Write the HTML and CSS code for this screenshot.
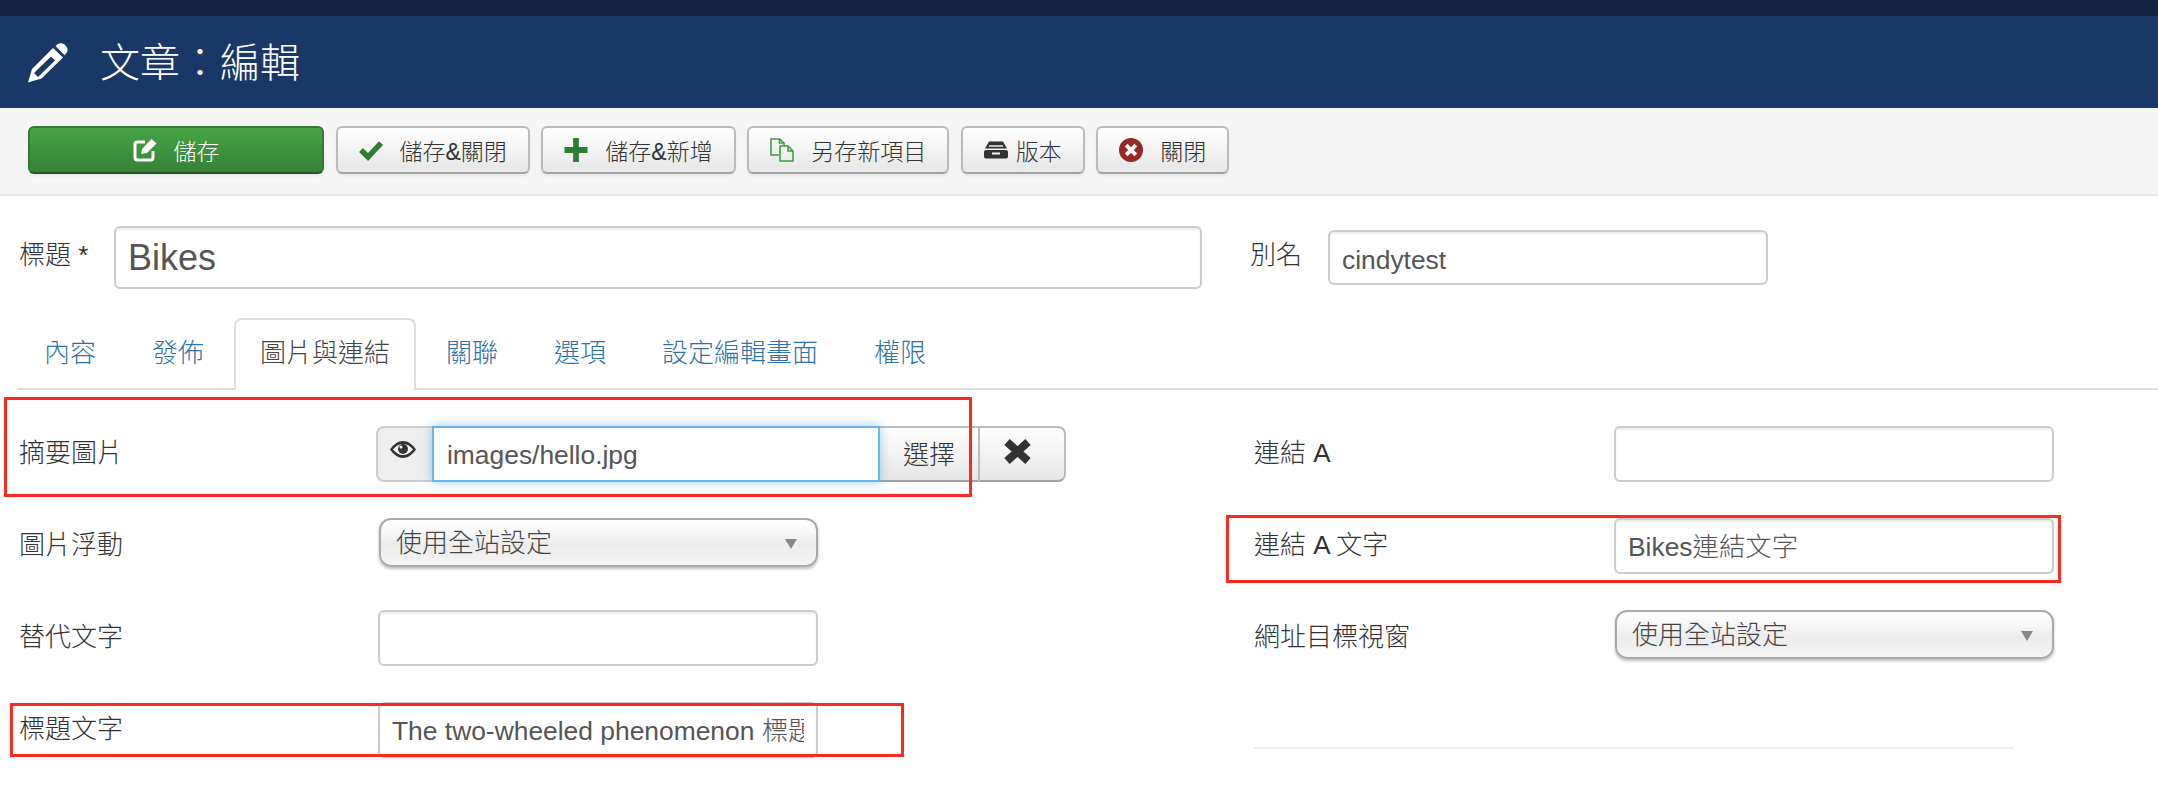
FILE: index.html
```html
<!DOCTYPE html>
<html lang="zh-Hant">
<head>
<meta charset="utf-8">
<title>文章：編輯</title>
<link rel="stylesheet" href="styles.css">
</head>
<body>
<div class="topbar"></div>
<header class="header">
  <svg class="ico-pencil" viewBox="0 0 40 40"><path d="M0 39.500L4 26 25 5l10 9.500L13.500 35.500zM6 30l4 4 17-16.500-4-4z" fill-rule="evenodd" fill="#fff"/><path d="M27.500 3l2-1.800Q33 -1 36.500 1.500l1.500 1.500q3 3.500 .5 7l-2 2.200z" fill="#fff"/></svg>
  <h1 class="page-title">文章：編輯</h1>
</header>
<nav class="toolbar">
  <button class="btn btn-save">
    <svg class="ico" viewBox="0 0 24 24"><path d="M12 4H4.500A2.500 2.500 0 0 0 2 6.500v13A2.500 2.500 0 0 0 4.500 22h13a2.500 2.500 0 0 0 2.500-2.500V13" fill="none" stroke="#fff" stroke-width="3"/><path d="M8 16l1-5L18.500 1l5 4.500L14 15z" fill="#fff"/></svg>
    儲存
  </button>
  <button class="btn">
    <svg class="ico" viewBox="0 0 24 20"><path d="M2 10l7 7L22 3" fill="none" stroke="#2f7d32" stroke-width="5.500"/></svg>
    儲存&amp;關閉
  </button>
  <button class="btn">
    <svg class="ico" viewBox="0 0 24 25"><path d="M9 0h6v9.500h9v6h-9V25H9v-9.500H0v-6h9z" fill="#2f7d32"/></svg>
    儲存&amp;新增
  </button>
  <button class="btn">
    <svg class="ico" viewBox="0 0 24 24"><path d="M9 17H1V1h8.500L14 5v3M9.500 1v4H14M10 8h8l5 5v10H10zM18 8v5h5" fill="none" stroke="#3d9a3d" stroke-width="1.500"/></svg>
    另存新項目
  </button>
  <button class="btn btn-tight">
    <svg class="ico" viewBox="0 0 24 17"><path d="M5 0h14l4 7H1z" fill="#333"/><path d="M5 4.500h14" stroke="#eee" stroke-width="1.500"/><path d="M2 8.500h20a2 2 0 0 1 2 2V15a2 2 0 0 1-2 2H2a2 2 0 0 1-2-2v-4.500a2 2 0 0 1 2-2zM8 11v2h8v-2z" fill="#333" fill-rule="evenodd"/></svg>
    版本
  </button>
  <button class="btn">
    <svg class="ico" viewBox="0 0 25 25"><circle cx="12.500" cy="12.500" r="12.500" fill="#942a25"/><path d="M7.500 7.500l10 10M17.500 7.500l-10 10" stroke="#fff" stroke-width="4"/></svg>
    關閉
  </button>
</nav>
<main class="main">
  <div class="title-row">
    <label class="title-label">標題 *</label>
    <input class="input input-title" value="Bikes">
    <label class="alias-label">別名</label>
    <input class="input input-alias" value="cindytest">
  </div>
  <ul class="tabs">
    <li class="tab">內容</li>
    <li class="tab">發佈</li>
    <li class="tab tab-active">圖片與連結</li>
    <li class="tab">關聯</li>
    <li class="tab">選項</li>
    <li class="tab">設定編輯畫面</li>
    <li class="tab">權限</li>
  </ul>
  <div class="columns">
    <section class="col col-left">
      <div class="row">
        <label class="label label-append">摘要圖片</label>
        <div class="append">
          <span class="addon">
            <svg class="ico-eye" viewBox="0 0 26 17"><path d="M0 8.500C4 3 8 0 13 0s9 3 13 8.500C22 14 18 17 13 17S4 14 0 8.500z" fill="#333"/><path d="M3 8.500C6 5 9 3 13 3s7 2 10 5.500C20 12 17 14 13 14S6 12 3 8.500z" fill="#fff"/><circle cx="13" cy="8" r="5" fill="#333"/><circle cx="11" cy="6" r="1.500" fill="#fff"/></svg>
          </span>
          <input class="input-focus" value="images/hello.jpg">
          <button class="append-btn append-select">選擇</button>
          <button class="append-btn append-clear">
            <svg class="ico-x" viewBox="0 0 27 25"><path d="M3 3l21 19M24 3L3 22" stroke="#333" stroke-width="8"/></svg>
          </button>
        </div>
      </div>
      <div class="row">
        <label class="label">圖片浮動</label>
        <div class="select"><select><option>使用全站設定</option></select></div>
      </div>
      <div class="row">
        <label class="label">替代文字</label>
        <input class="input input-field" value="">
      </div>
      <div class="row">
        <label class="label">標題文字</label>
        <input class="input input-field" value="The two-wheeled phenomenon 標題文字">
      </div>
    </section>
    <section class="col col-right">
      <div class="row">
        <label class="label">連結 A</label>
        <input class="input input-field" value="">
      </div>
      <div class="row">
        <label class="label">連結 A 文字</label>
        <input class="input input-field" value="Bikes連結文字">
      </div>
      <div class="row">
        <label class="label">網址目標視窗</label>
        <div class="select"><select><option>使用全站設定</option></select></div>
      </div>
      <hr class="rule">
    </section>
  </div>
  <div class="mark mark-image"></div>
  <div class="mark mark-caption"></div>
  <div class="mark mark-linktext"></div>
</main>
</body>
</html>
```

FILE: styles.css
```css
* { box-sizing: border-box; }
html, body { margin: 0; padding: 0; height: 794px; overflow: hidden; background: #fff; }
body {
  font-family: "Liberation Sans", "Noto Sans CJK TC", sans-serif;
  font-size: 26px;
  font-weight: 300;
  color: #333;
}
.topbar { height: 16px; background: #14233f; }
.header {
  height: 92px;
  background: #1a3867;
  display: flex;
  align-items: center;
  padding-left: 28px;
}
.ico-pencil { width: 40px; height: 40px; flex: none; margin-top: 1px; }
.page-title {
  margin: 2px 0 0 32px;
  font-size: 40px;
  font-weight: 300;
  color: #fff;
  line-height: 1;
}
.toolbar {
  height: 88px;
  background: #f5f5f5;
  border-bottom: 2px solid #e6e6e6;
  display: flex;
  align-items: flex-start;
  gap: 11.500px;
  padding: 18px 0 0 28px;
}
.btn {
  height: 48px;
  padding: 0 21px;
  display: flex;
  align-items: center;
  font: inherit;
  font-size: 23px;
  color: #333;
  background: linear-gradient(#ffffff, #e6e6e6);
  border: 2px solid #bbb;
  border-bottom-color: #a2a2a2;
  border-radius: 6px;
  box-shadow: 0 2px 3px rgba(0,0,0,.06);
  white-space: nowrap;
}
.ico { width: 24px; height: 24px; flex: none; margin-right: 17px; }
.btn-tight .ico { margin-right: 8px; }
.btn-save {
  width: 296px;
  justify-content: center;
  color: #fff;
  background: linear-gradient(#46a546, #378137);
  border-color: #347a34;
  border-bottom-color: #235523;
}
.main { position: relative; height: 598px; }
.title-row {
  height: 122px;
  padding: 30px 0 0 19px;
  display: flex;
  align-items: flex-start;
}
.title-label { width: 95px; line-height: 58px; font-size: 26px; }
.alias-label { width: 78px; margin-left: 48px; line-height: 58px; }
.input {
  font: inherit;
  font-size: 26.400px;
  color: #555;
  background: #fff;
  border: 2px solid #ccc;
  border-radius: 6px;
  box-shadow: inset 0 2px 2px rgba(0,0,0,.075);
  outline: none;
}
.input-title { width: 1088px; height: 63px; font-size: 36px; padding: 0 12px; }
.input-alias { width: 440px; height: 55px; margin-top: 4px; padding: 5px 12px 0; }
.input-field { width: 440px; height: 56px; margin-left: -1px; padding: 0 12px 3px; }
.tabs {
  list-style: none;
  margin: 0 0 0 17px;
  padding: 0;
  height: 72px;
  display: flex;
  border-bottom: 2px solid #ddd;
}
.tab {
  height: 72px;
  padding: 0 24px;
  margin-left: 1px;
  margin-right: 3px;
  line-height: 66px;
  color: #3071a9;
  border: 2px solid transparent;
  border-bottom: 0;
}
.tab-active {
  color: #444;
  background: #fff;
  border-color: #ddd;
  border-radius: 8px 8px 0 0;
}
.columns { display: flex; padding-top: 36px; }
.col-left { width: 1254px; padding-left: 19px; flex: none; }
.col-right { width: 800px; flex: none; }
.row { display: flex; align-items: flex-start; height: 92px; }
.label { width: 360px; line-height: 54px; flex: none; }
.col-right .label { width: 361px; }
.label-append { width: 357px; }
.append { display: flex; height: 56px; width: 690px; }
.addon {
  width: 56px;
  flex: none;
  display: flex;
  justify-content: center;
  padding: 13px 4px 0 0;
  background: #eee;
  border: 2px solid #ccc;
  border-right: 0;
  border-radius: 8px 0 0 8px;
}
.ico-eye { width: 26px; height: 17px; }
.input-focus {
  width: 448px;
  flex: none;
  font: inherit;
  font-size: 26.400px;
  color: #555;
  padding: 2px 13px 0;
  background: #fff;
  border: 2px solid #6cb4ee;
  outline: none;
  box-shadow: 0 0 10px rgba(82,168,236,.6);
  position: relative;
  z-index: 1;
}
.append-btn {
  font: inherit;
  color: #333;
  background: linear-gradient(#fff, #e6e6e6);
  border: 2px solid #bbb;
  border-bottom-color: #a2a2a2;
  padding: 0 0 4px;
  flex: none;
}
.append-select { width: 98px; border-left: 0; border-right: 0; }
.append-clear {
  width: 88px;
  display: flex;
  align-items: flex-start;
  justify-content: center;
  padding: 11px 9px 0 0;
  border-radius: 0 8px 8px 0;
}
.ico-x { width: 27px; height: 25px; }
.select { position: relative; width: 439px; }
.select select {
  appearance: none;
  width: 100%;
  height: 49px;
  font: inherit;
  color: #444;
  padding: 0 15px;
  background: linear-gradient(#ffffff 0%, #f8f8f8 25%, #ececec 55%, #f4f4f4 100%);
  border: 2px solid #aaa;
  border-radius: 12px;
  box-shadow: 0 2px 3px rgba(0,0,0,.25);
  outline: none;
}
.select::after {
  content: "";
  position: absolute;
  right: 21px;
  top: 21px;
  border-left: 6.500px solid transparent;
  border-right: 6.500px solid transparent;
  border-top: 10px solid #888;
}
.rule { width: 760px; margin: 45px 0 0; border: 0; border-top: 2px solid #eee; }
.mark { position: absolute; border: 3px solid #fb2a20; pointer-events: none; }
.mark-image { left: 4px; top: 201px; width: 968px; height: 100px; }
.mark-caption { left: 10px; top: 507px; width: 894px; height: 54px; }
.mark-linktext { left: 1226px; top: 319px; width: 835px; height: 68px; }
```
